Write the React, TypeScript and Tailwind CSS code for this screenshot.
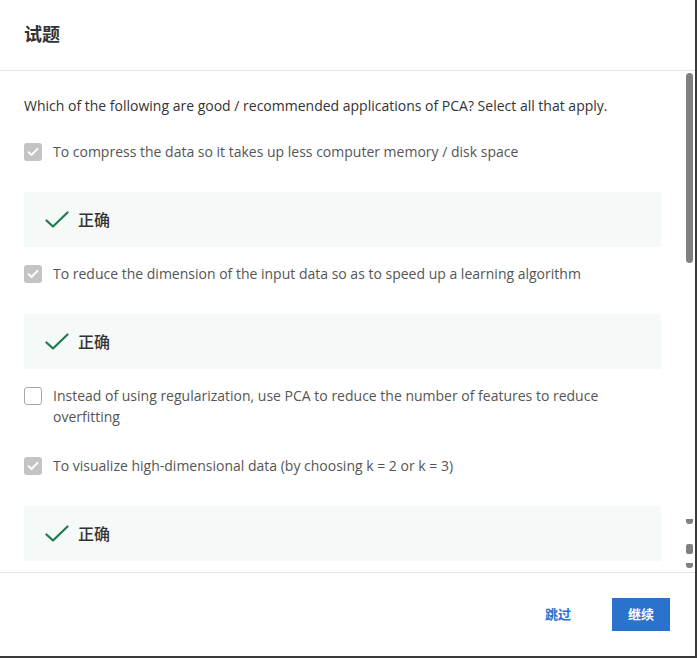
import { FC } from 'react';

const options = [
  {
    text: 'To compress the data so it takes up less computer memory / disk space',
    checked: true,
    correct: true,
  },
  {
    text: 'To reduce the dimension of the input data so as to speed up a learning algorithm',
    checked: true,
    correct: true,
  },
  {
    text: 'Instead of using regularization, use PCA to reduce the number of features to reduce overfitting',
    checked: false,
    correct: false,
  },
  {
    text: 'To visualize high-dimensional data (by choosing k = 2 or k = 3)',
    checked: true,
    correct: true,
  },
];

const Checkbox: FC<{ checked: boolean }> = ({ checked }) =>
  checked ? (
    <div className="mt-[1.5px] flex h-[18px] w-[18px] shrink-0 items-center justify-center rounded-[3px] bg-[#c4c4c4]">
      <svg width="12" height="10" viewBox="0 0 12 10" fill="none">
        <path d="M1.5 5.2 4.5 8 10.5 1.8" stroke="#fff" strokeWidth="1.8" strokeLinecap="round" strokeLinejoin="round" />
      </svg>
    </div>
  ) : (
    <div className="mt-[1.5px] h-[18px] w-[18px] shrink-0 rounded-[3px] border border-[#a8a8a8] bg-white" />
  );

const Feedback: FC = () => (
  <div className="mt-[30px] mb-[16px] flex h-[55px] items-center bg-[#f5f9f8] pl-[21px]">
    <svg width="24" height="18" viewBox="0 0 24 18" fill="none">
      <path d="M1.5 9.5 8 15.5 22.5 1.5" stroke="#1f7a4d" strokeWidth="2.2" strokeLinecap="round" strokeLinejoin="round" />
    </svg>
    <span className="ml-[9px] text-[16px] font-medium text-[#333]">正确</span>
  </div>
);

export default function App() {
  return (
    <div
      className="h-[658px] w-[697px] bg-[#3a3a3a]"
      style={{ fontFamily: '"Open Sans", "Noto Sans CJK SC", sans-serif' }}
    >
      <div className="flex h-[656px] w-[695px] flex-col bg-white">
        {/* Header */}
        <div className="flex h-[71px] shrink-0 items-center border-b border-[#e3e3e3] px-[24px]">
          <h1 className="-mt-[2px] text-[18px] font-bold text-[#333]">试题</h1>
        </div>

        {/* Body */}
        <div className="relative h-[501px] shrink-0 overflow-hidden">
          <div className="pt-[24px] pr-[34px] pl-[24px]">
            <p className="text-[14px] leading-[21px] text-[#333]">
              Which of the following are good / recommended applications of PCA? Select all that apply.
            </p>
            <div className="mt-[25px]">
              {options.map((opt, i) => (
                <div key={i}>
                  <div className="flex gap-[11px]">
                    <Checkbox checked={opt.checked} />
                    <span className="text-[14px] leading-[21px] text-[#555]">{opt.text}</span>
                  </div>
                  {opt.correct ? <Feedback /> : <div className="h-[28px]" />}
                </div>
              ))}
            </div>
          </div>

          {/* Scrollbar */}
          <div className="absolute top-[2px] right-[2px] h-[190px] w-[7px] rounded-[4px] bg-[#808080]" />
          <div className="absolute top-[448px] right-[2px] h-[5px] w-[7px] rounded-b-[3px] bg-[#808080]" />
          <div className="absolute top-[473px] right-[2px] h-[10px] w-[7px] rounded-[2px] bg-[#808080]" />
          <div className="absolute top-[492px] right-[2px] h-[5px] w-[7px] rounded-b-[3px] bg-[#808080]" />
        </div>

        {/* Footer */}
        <div className="flex flex-1 items-center justify-end gap-[41px] border-t border-[#e3e3e3] pr-[25px]">
          <button className="text-[13px] font-bold text-[#2a73cc]">跳过</button>
          <button className="h-[33px] w-[58px] bg-[#2a73cc] text-[13px] font-bold text-white">继续</button>
        </div>
      </div>
    </div>
  );
}
